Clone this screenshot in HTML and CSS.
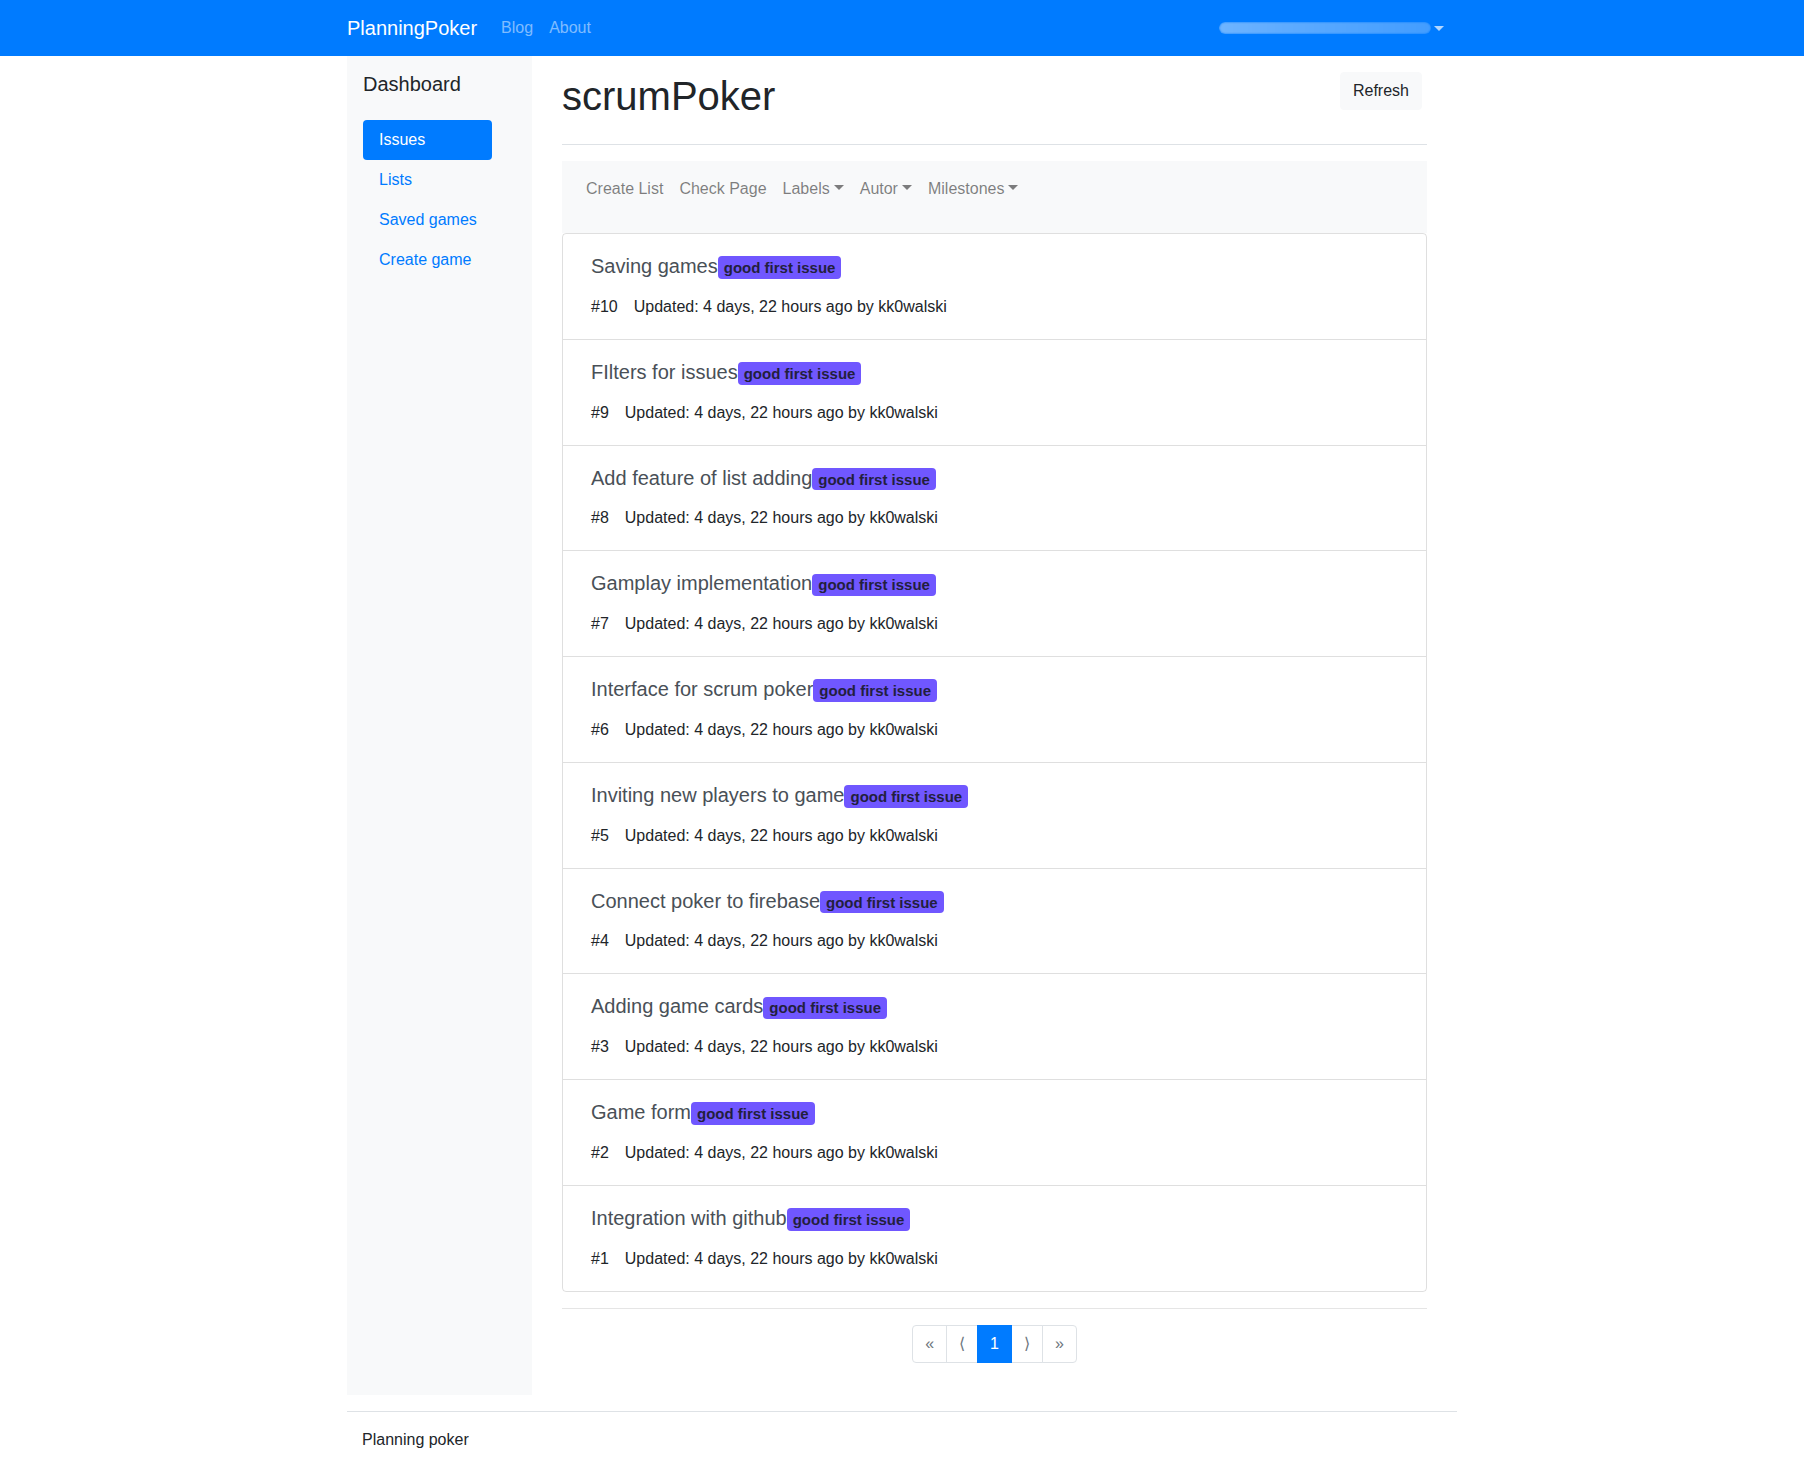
FILE: index.html
```html
<!DOCTYPE html>
<html lang="en">
<head>
<meta charset="utf-8">
<title>scrumPoker</title>
<link rel="stylesheet" href="styles.css">
</head>
<body>
<nav class="topbar">
  <div class="container topbar-inner">
    <a class="brand" href="#">PlanningPoker</a>
    <a class="top-link" href="#">Blog</a>
    <a class="top-link" href="#">About</a>
    <div class="user-toggle" aria-label="user menu">
      <span class="smear"></span>
      <span class="top-caret"></span>
    </div>
  </div>
</nav>

<div class="container">
  <div class="row">
    <aside class="sidebar">
      <h5 class="side-title">Dashboard</h5>
      <ul class="side-nav">
        <li><a class="side-link active" href="#">Issues</a></li>
        <li><a class="side-link" href="#">Lists</a></li>
        <li><a class="side-link" href="#">Saved games</a></li>
        <li><a class="side-link" href="#">Create game</a></li>
      </ul>
    </aside>

    <main class="main">
      <div class="page-head">
        <h1 class="page-title">scrumPoker</h1>
        <button class="btn-light" type="button">Refresh</button>
      </div>

      <nav class="filterbar">
        <ul class="filter-nav">
          <li><a class="filter-link" href="#">Create List</a></li>
          <li><a class="filter-link" href="#">Check Page</a></li>
          <li><a class="filter-link dropdown" href="#">Labels</a></li>
          <li><a class="filter-link dropdown" href="#">Autor</a></li>
          <li><a class="filter-link dropdown" href="#">Milestones</a></li>
        </ul>
      </nav>

      <div class="card">
        <div class="issue">
          <h5 class="issue-title">Saving games<span class="badge">good first issue</span></h5>
          <p class="issue-meta"><span class="num">#10</span>Updated: 4 days, 22 hours ago by kk0walski</p>
        </div>
        <div class="issue">
          <h5 class="issue-title">FIlters for issues<span class="badge">good first issue</span></h5>
          <p class="issue-meta"><span class="num">#9</span>Updated: 4 days, 22 hours ago by kk0walski</p>
        </div>
        <div class="issue">
          <h5 class="issue-title">Add feature of list adding<span class="badge">good first issue</span></h5>
          <p class="issue-meta"><span class="num">#8</span>Updated: 4 days, 22 hours ago by kk0walski</p>
        </div>
        <div class="issue">
          <h5 class="issue-title">Gamplay implementation<span class="badge">good first issue</span></h5>
          <p class="issue-meta"><span class="num">#7</span>Updated: 4 days, 22 hours ago by kk0walski</p>
        </div>
        <div class="issue">
          <h5 class="issue-title">Interface for scrum poker<span class="badge">good first issue</span></h5>
          <p class="issue-meta"><span class="num">#6</span>Updated: 4 days, 22 hours ago by kk0walski</p>
        </div>
        <div class="issue">
          <h5 class="issue-title">Inviting new players to game<span class="badge">good first issue</span></h5>
          <p class="issue-meta"><span class="num">#5</span>Updated: 4 days, 22 hours ago by kk0walski</p>
        </div>
        <div class="issue">
          <h5 class="issue-title">Connect poker to firebase<span class="badge">good first issue</span></h5>
          <p class="issue-meta"><span class="num">#4</span>Updated: 4 days, 22 hours ago by kk0walski</p>
        </div>
        <div class="issue">
          <h5 class="issue-title">Adding game cards<span class="badge">good first issue</span></h5>
          <p class="issue-meta"><span class="num">#3</span>Updated: 4 days, 22 hours ago by kk0walski</p>
        </div>
        <div class="issue">
          <h5 class="issue-title">Game form<span class="badge">good first issue</span></h5>
          <p class="issue-meta"><span class="num">#2</span>Updated: 4 days, 22 hours ago by kk0walski</p>
        </div>
        <div class="issue">
          <h5 class="issue-title">Integration with github<span class="badge">good first issue</span></h5>
          <p class="issue-meta"><span class="num">#1</span>Updated: 4 days, 22 hours ago by kk0walski</p>
        </div>
      </div>

      <hr class="rule">

      <ul class="pagination">
        <li><a class="page-link first" href="#">&laquo;</a></li>
        <li><a class="page-link" href="#">&#10216;</a></li>
        <li><a class="page-link current" href="#">1</a></li>
        <li><a class="page-link" href="#">&#10217;</a></li>
        <li><a class="page-link last" href="#">&raquo;</a></li>
      </ul>
    </main>
  </div>

  <footer class="footer">
    <p class="footer-text">Planning poker</p>
  </footer>
</div>
</body>
</html>
```

FILE: styles.css
```css
* { box-sizing: border-box; }

html, body {
  margin: 0;
  padding: 0;
}

body {
  font-family: "Liberation Sans", Arial, sans-serif;
  font-size: 16px;
  line-height: 1.5;
  color: #212529;
  background: #fff;
}

a { text-decoration: none; }

ul { list-style: none; margin: 0; padding: 0; }

.container {
  width: 1110px;
  margin: 0 auto;
}

/* top navbar */
.topbar {
  background: #007bff;
  height: 56px;
  padding: 8px 0;
}

.topbar-inner {
  display: flex;
  align-items: center;
  height: 40px;
}

.brand {
  color: #fff;
  font-size: 20px;
  line-height: 30px;
  padding: 5px 0;
  margin-right: 16px;
}

.top-link {
  color: rgba(255, 255, 255, 0.5);
  padding: 8px;
  line-height: 24px;
}

.user-toggle {
  margin-left: auto;
  margin-right: 12px;
  width: 226px;
  height: 20px;
  display: flex;
  align-items: center;
  position: relative;
}

.smear {
  display: block;
  width: 212px;
  height: 12px;
  border-radius: 6px;
  background:
    repeating-linear-gradient(90deg, rgba(255,255,255,0.7) 0 1px, rgba(255,255,255,0.3) 1px 3px);
  filter: blur(1.2px);
  -webkit-mask-image: linear-gradient(90deg, #000 0%, rgba(0,0,0,0.85) 30%, rgba(0,0,0,0.6) 100%);
  mask-image: linear-gradient(90deg, #000 0%, rgba(0,0,0,0.85) 30%, rgba(0,0,0,0.6) 100%);
}

.top-caret {
  width: 0;
  height: 0;
  margin-left: 3px;
  border-top: 5px solid rgba(255,255,255,0.7);
  border-left: 5px solid transparent;
  border-right: 5px solid transparent;
  filter: blur(0.5px);
}

/* layout */
.row {
  display: flex;
  align-items: stretch;
}

.sidebar {
  width: 185px;
  flex: 0 0 185px;
  background: #f8f9fa;
  padding: 16px 40px 16px 16px;
}

.side-title {
  font-size: 20px;
  font-weight: 400;
  line-height: 24px;
  margin: 0 0 24px;
  color: #212529;
}

.side-link {
  display: block;
  padding: 8px 16px;
  line-height: 24px;
  color: #007bff;
  border-radius: 4px;
  white-space: nowrap;
}

.side-link.active {
  background: #007bff;
  color: #fff;
}

.main {
  width: 865px;
  margin-left: 30px;
  padding-bottom: 16px;
}

.page-head {
  display: flex;
  justify-content: space-between;
  align-items: flex-start;
  padding-top: 16px;
  padding-bottom: 16px;
  border-bottom: 1px solid #dee2e6;
  margin-bottom: 16px;
}

.page-title {
  font-size: 40px;
  font-weight: 400;
  line-height: 48px;
  margin: 0 0 8px;
  color: #212529;
}

.btn-light {
  font-family: inherit;
  font-size: 16px;
  line-height: 24px;
  padding: 6px 12px;
  color: #212529;
  background: #f8f9fa;
  border: 1px solid #f8f9fa;
  border-radius: 4px;
  margin-right: 5px;
}

/* filter bar */
.filterbar {
  background: #f8f9fa;
  padding: 8px 16px;
}

.filter-nav {
  display: flex;
  margin-bottom: 16px;
}

.filter-link {
  display: block;
  padding: 8px;
  line-height: 24px;
  color: rgba(0, 0, 0, 0.5);
}

.filter-link.dropdown::after {
  content: "";
  display: inline-block;
  margin-left: 4px;
  vertical-align: 4px;
  border-top: 5px solid;
  border-left: 5px solid transparent;
  border-right: 5px solid transparent;
}

/* issues card */
.card {
  border: 1px solid rgba(0, 0, 0, 0.125);
  border-radius: 4px;
  margin-bottom: 16px;
}

.issue {
  padding: 20px 28px;
  border-bottom: 1px solid rgba(0, 0, 0, 0.125);
}

.issue:last-child { border-bottom: 0; }

.issue-title {
  font-size: 20px;
  font-weight: 400;
  line-height: 24px;
  margin: 0 0 16px;
  color: #495057;
}

.badge {
  display: inline-block;
  font-size: 15px;
  font-weight: 700;
  line-height: 1;
  padding: 3.75px 6px;
  border-radius: 4px;
  background: #7057ff;
  color: #231f3d;
  vertical-align: baseline;
}

.issue-meta {
  margin: 0;
  line-height: 24px;
  color: #212529;
}

.num { margin-right: 16px; }

.rule {
  border: 0;
  border-top: 1px solid rgba(0, 0, 0, 0.1);
  margin: 0 0 16px;
}

/* pagination */
.pagination {
  display: flex;
  justify-content: center;
  margin-bottom: 16px;
}

.page-link {
  display: block;
  padding: 8px 12px;
  line-height: 20px;
  color: #6c757d;
  background: #fff;
  border: 1px solid #dee2e6;
  margin-left: -1px;
}

.page-link.first {
  margin-left: 0;
  border-radius: 4px 0 0 4px;
}

.page-link.last { border-radius: 0 4px 4px 0; }

.page-link.current {
  background: #007bff;
  border-color: #007bff;
  color: #fff;
  position: relative;
  z-index: 1;
}

/* footer */
.footer {
  margin-top: 16px;
  border-top: 1px solid #dee2e6;
  padding: 16px 15px 16px;
}

.footer-text {
  margin: 0;
  line-height: 24px;
}
```
